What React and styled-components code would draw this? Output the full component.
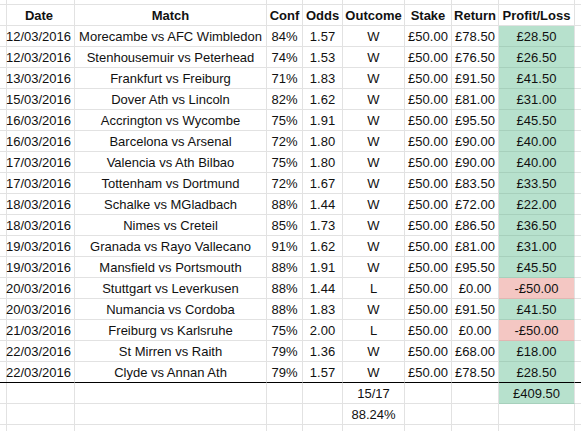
import React from 'react';
import styled, { createGlobalStyle } from 'styled-components';

const GlobalStyle = createGlobalStyle`
  html, body {
    margin: 0;
    padding: 0;
    background: #ffffff;
  }
  body {
    font-family: "Liberation Sans", Arial, sans-serif;
    font-size: 13px;
    color: #111;
    overflow: hidden;
  }
`;

const COLS = '4px 71px 192px 36px 40px 62px 47px 47px 76px 1fr';

const Sheet = styled.div`
  width: 581px;
  height: 431px;
  overflow: hidden;
  display: flex;
  flex-direction: column;
`;

const Row = styled.div`
  display: grid;
  grid-template-columns: ${COLS};
  height: ${(props) => props.$height || 21}px;
  flex-shrink: 0;
`;

const fills = {
  green: { bg: '#b7e1cd', line: '#a7d0bc' },
  red: { bg: '#f4c7c3', line: '#e2b6b2' },
};

const Cell = styled.div`
  box-sizing: border-box;
  border-right: 1px solid #e2e2e2;
  border-bottom: 1px solid ${(props) => (props.$thick ? '#000' : props.$fill ? fills[props.$fill].line : '#e2e2e2')};
  background: ${(props) => (props.$fill ? fills[props.$fill].bg : 'transparent')};
  display: flex;
  align-items: center;
  justify-content: ${(props) => props.$align || 'center'};
  padding: 0 3px;
  font-weight: ${(props) => (props.$bold ? 700 : 400)};
  white-space: nowrap;
  overflow: hidden;
  line-height: 1;
`;

const bets = [
  ['12/03/2016', 'Morecambe vs AFC Wimbledon', '84%', '1.57', 'W', '£50.00', '£78.50', '£28.50'],
  ['12/03/2016', 'Stenhousemuir vs Peterhead', '74%', '1.53', 'W', '£50.00', '£76.50', '£26.50'],
  ['13/03/2016', 'Frankfurt vs Freiburg', '71%', '1.83', 'W', '£50.00', '£91.50', '£41.50'],
  ['15/03/2016', 'Dover Ath vs Lincoln', '82%', '1.62', 'W', '£50.00', '£81.00', '£31.00'],
  ['16/03/2016', 'Accrington vs Wycombe', '75%', '1.91', 'W', '£50.00', '£95.50', '£45.50'],
  ['16/03/2016', 'Barcelona vs Arsenal', '72%', '1.80', 'W', '£50.00', '£90.00', '£40.00'],
  ['17/03/2016', 'Valencia vs Ath Bilbao', '75%', '1.80', 'W', '£50.00', '£90.00', '£40.00'],
  ['17/03/2016', 'Tottenham vs Dortmund', '72%', '1.67', 'W', '£50.00', '£83.50', '£33.50'],
  ['18/03/2016', 'Schalke vs MGladbach', '88%', '1.44', 'W', '£50.00', '£72.00', '£22.00'],
  ['18/03/2016', 'Nimes vs Creteil', '85%', '1.73', 'W', '£50.00', '£86.50', '£36.50'],
  ['19/03/2016', 'Granada vs Rayo Vallecano', '91%', '1.62', 'W', '£50.00', '£81.00', '£31.00'],
  ['19/03/2016', 'Mansfield vs Portsmouth', '88%', '1.91', 'W', '£50.00', '£95.50', '£45.50'],
  ['20/03/2016', 'Stuttgart vs Leverkusen', '88%', '1.44', 'L', '£50.00', '£0.00', '-£50.00'],
  ['20/03/2016', 'Numancia vs Cordoba', '88%', '1.83', 'W', '£50.00', '£91.50', '£41.50'],
  ['21/03/2016', 'Freiburg vs Karlsruhe', '75%', '2.00', 'L', '£50.00', '£0.00', '-£50.00'],
  ['22/03/2016', 'St Mirren vs Raith', '79%', '1.36', 'W', '£50.00', '£68.00', '£18.00'],
  ['22/03/2016', 'Clyde vs Annan Ath', '79%', '1.57', 'W', '£50.00', '£78.50', '£28.50'],
];

const headers = ['Date', 'Match', 'Conf', 'Odds', 'Outcome', 'Stake', 'Return', 'Profit/Loss'];

const BlankRow = ({ height }) => (
  <Row $height={height}>
    {Array.from({ length: 10 }).map((_, i) => <Cell key={i} />)}
  </Row>
);

const App = () => (
  <>
    <GlobalStyle />
    <Sheet>
      <BlankRow height={5} />
      <Row>
        <Cell />
        {headers.map((h) => <Cell key={h} $bold>{h}</Cell>)}
        <Cell />
      </Row>
      {bets.map((b, i) => {
        const last = i === bets.length - 1;
        return (
          <Row key={i}>
            <Cell $thick={last} />
            <Cell $thick={last} $align="flex-end">{b[0]}</Cell>
            <Cell $thick={last}>{b[1]}</Cell>
            <Cell $thick={last}>{b[2]}</Cell>
            <Cell $thick={last}>{b[3]}</Cell>
            <Cell $thick={last}>{b[4]}</Cell>
            <Cell $thick={last}>{b[5]}</Cell>
            <Cell $thick={last}>{b[6]}</Cell>
            <Cell $thick={last} $fill={b[4] === 'L' ? 'red' : 'green'}>{b[7]}</Cell>
            <Cell $thick={last} />
          </Row>
        );
      })}
      <Row>
        <Cell /><Cell /><Cell /><Cell /><Cell />
        <Cell>15/17</Cell>
        <Cell /><Cell />
        <Cell $fill="green">£409.50</Cell>
        <Cell />
      </Row>
      <Row>
        <Cell /><Cell /><Cell /><Cell /><Cell />
        <Cell>88.24%</Cell>
        <Cell /><Cell /><Cell /><Cell />
      </Row>
      <BlankRow />
    </Sheet>
  </>
);

export default App;
